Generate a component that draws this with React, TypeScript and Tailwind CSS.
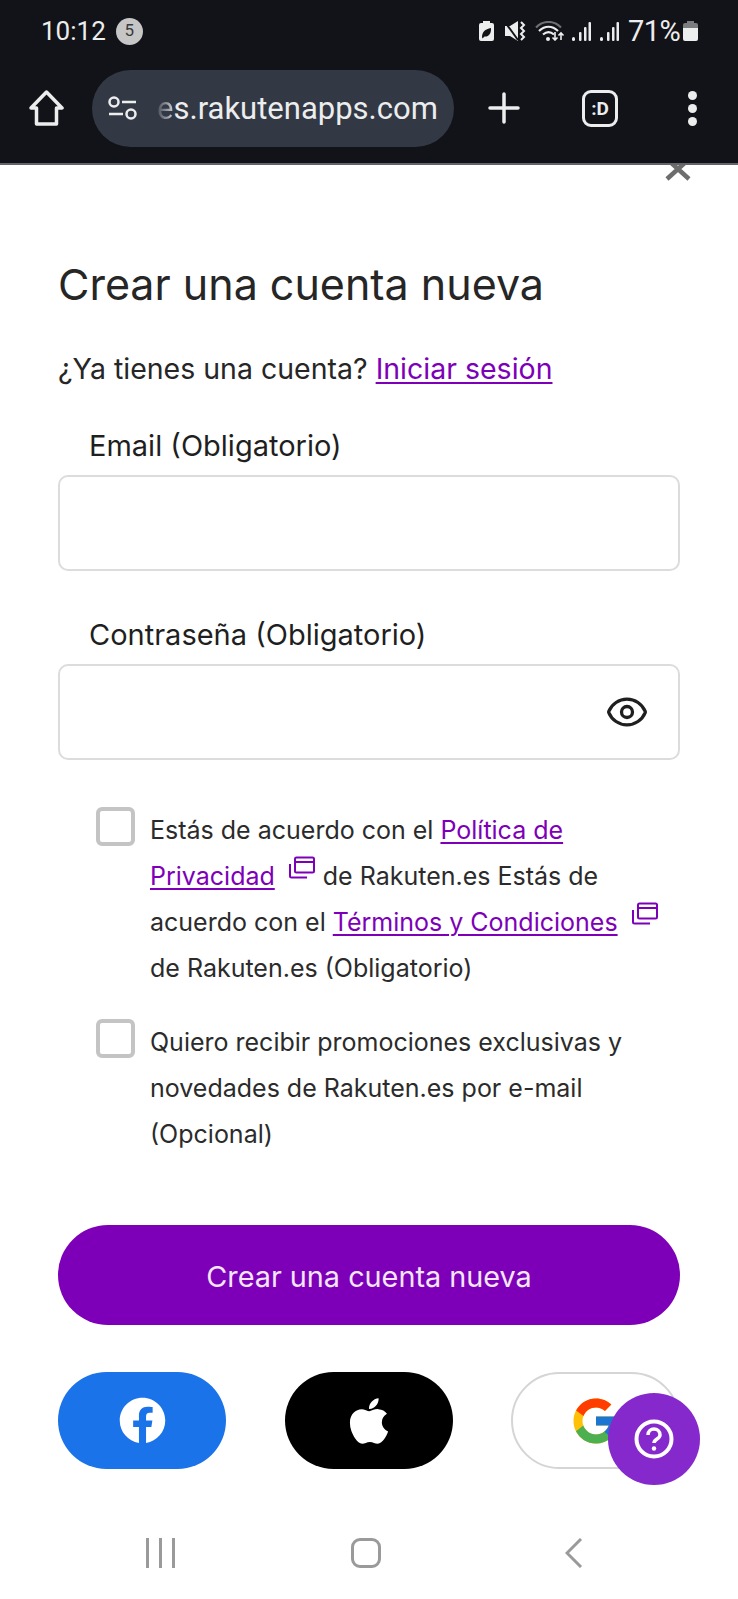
import { Eye } from 'lucide-react'
import { FaApple, FaFacebook } from 'react-icons/fa'
import { FcGoogle } from 'react-icons/fc'

const bodyFont = "font-['Inter','Noto_Sans',sans-serif]"

function StatusIcons() {
  return (
    <div className="flex items-center text-[#eceded]">
      {/* battery saver */}
      <svg width="15" height="20" viewBox="0 0 15 20" className="mr-[11px]">
        <path d="M4 0h7v2h2a2 2 0 0 1 2 2v14a2 2 0 0 1-2 2H2a2 2 0 0 1-2-2V4a2 2 0 0 1 2-2h2z" fill="currentColor" />
        <path d="M3 16c0-5 3-8 9-9 .3 6-2.500 9-6.500 8.500L3.500 17.500" fill="#121318" />
      </svg>
      {/* mute */}
      <svg width="21" height="20" viewBox="0 0 21 20" className="mr-[9px]">
        <path d="M0 5h5l8-5v20l-8-5H0z" fill="currentColor" />
        <path d="M0 1l13 18" stroke="#121318" strokeWidth="2" />
        <path d="M16 1l3 3-3 3 3 3-3 3 3 3-3 3" stroke="currentColor" strokeWidth="2" fill="none" />
      </svg>
      {/* wifi */}
      <svg width="30" height="20" viewBox="0 0 30 20" className="mr-[7px]" fill="none">
        <path d="M1 6.500C8-1 19-1 26 6.500" stroke="#6f7074" strokeWidth="2" />
        <path d="M4 10c6-5.500 13-5.500 19 0M8 13.500c3.500-3 7.500-3 11 0" stroke="currentColor" strokeWidth="2.200" />
        <circle cx="13" cy="18" r="2" fill="currentColor" />
        <path d="M20 11v8m-2.500-2.500L20 19l2.500-2.500M26 19v-7m-2.500 2.500L26 12l2.500 2.500" stroke="currentColor" strokeWidth="1.600" />
      </svg>
      {[0, 1].map(i => (
        <svg key={i} width="19" height="20" viewBox="0 0 19 20" className="mr-[9px] last-of-type:mr-[10px]" fill="currentColor">
          <rect x="0" y="16" width="3" height="4" rx="1.500" />
          <rect x="7" y="11" width="2.500" height="9" rx="1" />
          <rect x="12" y="6" width="2.500" height="14" rx="1" />
          <rect x="16.500" y="1" width="2.500" height="19" rx="1" />
        </svg>
      ))}
      <span className="font-['Roboto',sans-serif] text-[29px] leading-none mr-[5px] w-[50px] tracking-[-0.5px]">71%</span>
      <svg width="15" height="20" viewBox="0 0 15 20">
        <path d="M4 0h7v2h2a2 2 0 0 1 2 2v3H0V4a2 2 0 0 1 2-2h2z" fill="#7c7d80" />
        <path d="M0 7h15v11a2 2 0 0 1-2 2H2a2 2 0 0 1-2-2z" fill="currentColor" />
      </svg>
    </div>
  )
}

function StatusBar() {
  return (
    <div className="h-[60px] pt-[2px] pl-[41px] pr-[40px] flex items-center justify-between">
      <div className="flex items-center gap-[10px]">
        <span className="font-['Roboto',sans-serif] text-[26px] leading-none text-[#eceded]">10:12</span>
        <span className="w-[27px] h-[27px] rounded-full bg-[#c6c6c6] text-[#3a3a3a] text-[17px] flex items-center justify-center font-['Roboto',sans-serif]">5</span>
      </div>
      <StatusIcons />
    </div>
  )
}

function BrowserToolbar() {
  return (
    <div className="h-[105px] pl-[29px] flex items-center pb-[7px] border-b-2 border-[#62646a] box-border text-[#eceded]">
      <svg width="35" height="36" viewBox="0 0 35 36" fill="none" stroke="currentColor" strokeWidth="3.500" strokeLinejoin="round">
        <path d="M2 18 17.500 2 33 18h-5.500v16h-20V18z" />
      </svg>
      <div className="ml-[28px] w-[362px] h-[77px] rounded-full bg-[#333845] flex items-center pl-[16px]">
        <svg width="29" height="25" viewBox="0 0 29 25" fill="none" stroke="currentColor" strokeWidth="2.500">
          <circle cx="6" cy="6" r="4.500" />
          <path d="M14 6h14M1 18h14" />
          <circle cx="23" cy="18" r="4.500" />
        </svg>
        <span className="ml-[20px] font-['Roboto',sans-serif] text-[31px] leading-none text-[#eceded] whitespace-nowrap">
          <span className="text-transparent bg-clip-text bg-gradient-to-r from-[#4a4e5a] to-[#c9cbd0]">e</span>s.rakutenapps.com
        </span>
      </div>
      <svg width="32" height="32" viewBox="0 0 32 32" className="ml-[34px]" stroke="currentColor" strokeWidth="3.500" strokeLinecap="round">
        <path d="M16 2v28M2 16h28" />
      </svg>
      <div className="ml-[62px] w-[36px] h-[37px] rounded-[9px] border-[3.500px] border-[#eceded] flex items-center justify-center font-['Roboto',sans-serif] font-bold text-[19px] leading-none">:D</div>
      <div className="ml-[70px] flex flex-col gap-[4px]">
        <span className="w-[9px] h-[9px] rounded-full bg-[#eceded]" />
        <span className="w-[9px] h-[9px] rounded-full bg-[#eceded]" />
        <span className="w-[9px] h-[9px] rounded-full bg-[#eceded]" />
      </div>
    </div>
  )
}

function ExternalIcon() {
  return (
    <svg width="27" height="25" viewBox="0 0 27 25" fill="none" stroke="#7d00b8" strokeWidth="2" className="inline-block align-[4px] ml-[13px] mr-[8px]">
      <rect x="7" y="1.500" width="19" height="15" rx="1.500" />
      <path d="M7 6h19M2 8v12a1.500 1.500 0 0 0 1.500 1.500H19" />
    </svg>
  )
}

function Field({ label, children }: { label: string; children?: React.ReactNode }) {
  return (
    <div>
      <label className="block pl-[31px] text-[29px] leading-[34px] text-[#1f1f1f]">{label}</label>
      <div className="mt-[12px] h-[96px] rounded-[10px] border-2 border-[#dcdcdc] bg-white flex items-center justify-end pr-[29px]">
        {children}
      </div>
    </div>
  )
}

const linkClass = 'text-[#7d00b8] underline underline-offset-[3px] decoration-2'

function Check({ children }: { children: React.ReactNode }) {
  return (
    <div className="flex pl-[38px]">
      <span className="mt-[1px] w-[39px] h-[39px] shrink-0 rounded-[6px] border-4 border-[#c4c4c4] bg-white" />
      <p className="ml-[15px] mt-[1px] text-[25px] leading-[46px] text-[#2b2b2b]">{children}</p>
    </div>
  )
}

function Bars() {
  return (
    <div className="flex gap-[10px]">
      <span className="w-[3px] h-[30px] bg-[#9a9a9a]" />
      <span className="w-[3px] h-[30px] bg-[#9a9a9a]" />
      <span className="w-[3px] h-[30px] bg-[#9a9a9a]" />
    </div>
  )
}

export default function App() {
  return (
    <div className={`relative w-[738px] h-[1599px] overflow-hidden bg-white ${bodyFont}`}>
      <div className="relative z-10 bg-[#121318]">
        <StatusBar />
        <BrowserToolbar />
      </div>

      {/* close button, partly scrolled under the toolbar */}
      <div className="flex justify-end pr-[47px] -mt-[8px] h-[24px]">
        <svg width="26" height="24" viewBox="0 0 26 24" stroke="#6d6d6d" strokeWidth="4.500">
          <path d="M2 2l22 20M24 2 2 22" />
        </svg>
      </div>

      <main className="px-[58px]">
        <h1 className="mt-[77px] text-[43px] leading-[52px] text-[#262626]">Crear una cuenta nueva</h1>
        <p className="mt-[41px] text-[28.500px] leading-[36px] text-[#262626]">
          ¿Ya tienes una cuenta? <a className={linkClass}>Iniciar sesión</a>
        </p>

        <div className="mt-[42px] flex flex-col gap-[47px]">
          <Field label="Email (Obligatorio)" />
          <Field label="Contraseña (Obligatorio)">
            <Eye size={44} strokeWidth={1.8} className="text-[#1f1f1f]" />
          </Field>
        </div>

        <div className="mt-[46px] flex flex-col gap-[27px] pr-[10px]">
          <Check>
            Estás de acuerdo con el <a className={linkClass}>Política de Privacidad</a>
            <ExternalIcon />
            de Rakuten.es Estás de acuerdo con el <a className={linkClass}>Términos y Condiciones</a>
            <ExternalIcon />
            de Rakuten.es (Obligatorio)
          </Check>
          <Check>Quiero recibir promociones exclusivas y novedades de Rakuten.es por e-mail (Opcional)</Check>
        </div>

        <button className="mt-[68px] w-full h-[100px] pt-[3px] rounded-full bg-[#7d00b8] text-[#f3e6f8] text-[28.800px] flex items-center justify-center">
          Crear una cuenta nueva
        </button>

        <div className="mt-[47px] flex justify-between">
          <button className="w-[168px] h-[97px] rounded-full bg-[#1a73e8] flex items-center justify-center">
            <FaFacebook size={47} color="#fff" />
          </button>
          <button className="w-[168px] h-[97px] rounded-full bg-black flex items-center justify-center">
            <FaApple size={52} color="#fff" />
          </button>
          <button className="w-[169px] h-[97px] rounded-full border-2 border-[#d5d5d5] bg-white flex items-center justify-center">
            <FcGoogle size={54} />
          </button>
        </div>
      </main>

      {/* floating help button */}
      <button className="absolute left-[608px] top-[1393px] w-[92px] h-[92px] rounded-full bg-[#8529cd] flex items-center justify-center">
        <svg width="40" height="40" viewBox="0 0 40 40" fill="none" stroke="#fff" strokeWidth="4">
          <circle cx="20" cy="20" r="17.500" />
          <path d="M14 16c0-8 12-8 12 0 0 4-6 4-6 8" strokeWidth="3.500" />
          <circle cx="20" cy="29.500" r="2.200" fill="#fff" stroke="none" />
        </svg>
      </button>

      {/* android nav bar */}
      <nav className="absolute bottom-[31px] left-0 w-full h-[30px] flex items-center pl-[146px]">
        <Bars />
        <span className="ml-[176px] w-[30px] h-[30px] rounded-[9px] border-[3px] border-[#9a9a9a]" />
        <svg width="18" height="30" viewBox="0 0 18 30" fill="none" stroke="#9a9a9a" strokeWidth="3" className="ml-[184px]">
          <path d="M16 1 2 15l14 14" />
        </svg>
      </nav>
    </div>
  )
}
